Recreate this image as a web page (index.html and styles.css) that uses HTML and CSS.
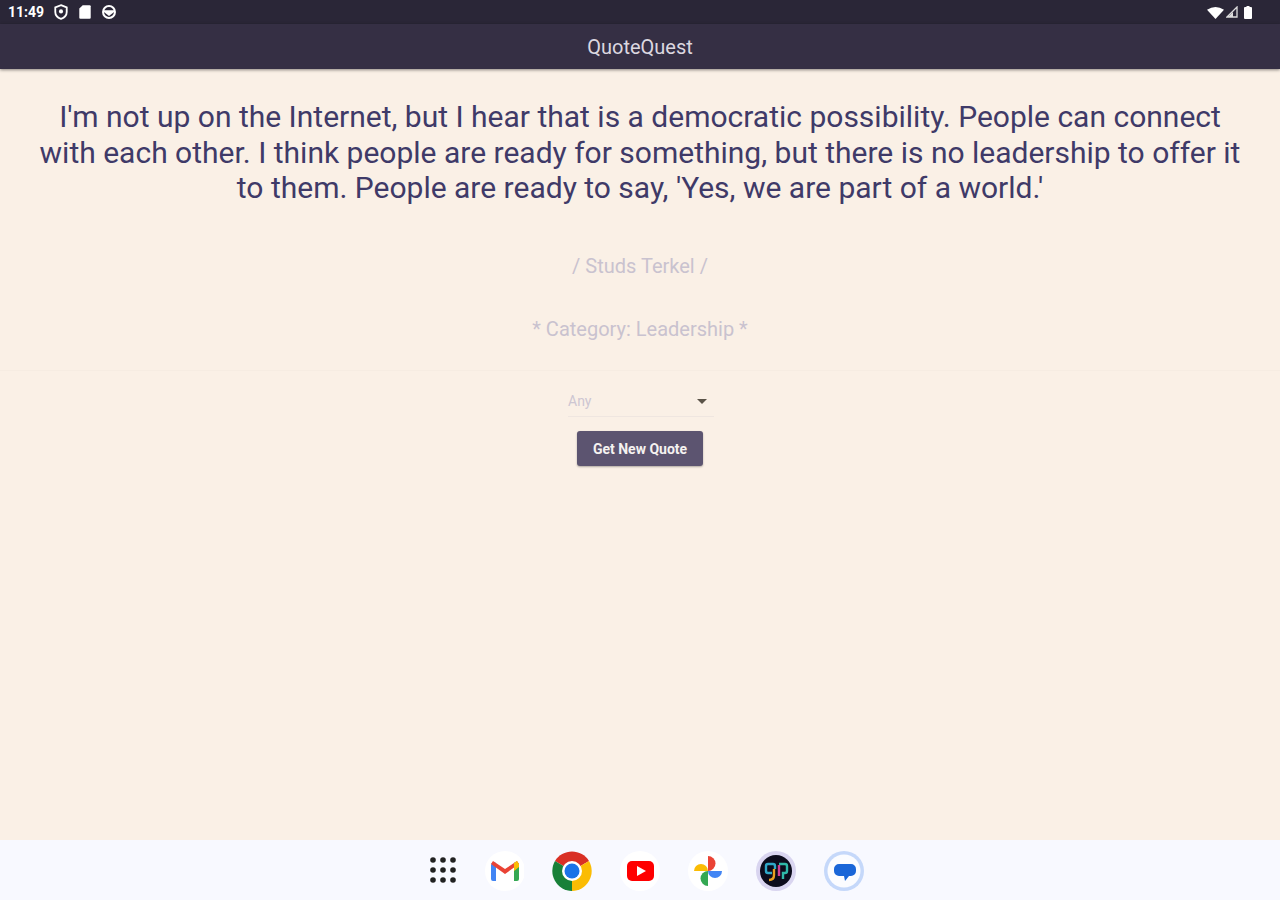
FILE: index.html
```html
<!DOCTYPE html>
<html lang="en">
<head>
<meta charset="utf-8">
<title>QuoteQuest</title>
<link rel="stylesheet" href="styles.css">
</head>
<body>
<div class="screen">
  <header class="status">
    <div class="status-left">
      <span class="clock">11:49</span>
      <svg class="si" viewBox="0 0 14 14"><path d="M7 1l5 2v4c0 3-2.200 5-5 6-2.800-1-5-3-5-6V3z" fill="none" stroke="#fff" stroke-width="1.600"/><circle cx="7" cy="6.500" r="1.800" fill="#fff"/></svg>
      <svg class="si" viewBox="0 0 14 14"><path d="M5 1h6a1 1 0 0 1 1 1v10a1 1 0 0 1-1 1H3a1 1 0 0 1-1-1V4z" fill="#fff"/></svg>
      <svg class="si" viewBox="0 0 14 14"><circle cx="7" cy="7" r="5.200" fill="none" stroke="#fff" stroke-width="1.800"/><path d="M2 5.500h10v1l-5 4-5-4z" fill="#fff"/></svg>
    </div>
    <div class="status-right">
      <svg class="wifi" viewBox="0 0 16 12"><path d="M8 12L0 3.500Q8-2 16 3.500z" fill="#fff"/></svg>
      <svg class="signal" viewBox="0 0 12 12"><path d="M11 1v10H1z" fill="none" stroke="#ddd" stroke-width="1.300"/><path d="M7 6v5H2z" fill="#ddd"/></svg>
      <svg class="battery" viewBox="0 0 8 13"><path d="M2.500 0h3v1H7a1 1 0 0 1 1 1v10a1 1 0 0 1-1 1H1a1 1 0 0 1-1-1V2a1 1 0 0 1 1-1h1.500z" fill="#fff"/></svg>
    </div>
  </header>
  <div class="appbar">QuoteQuest</div>
  <main class="content">
    <section class="quote-block">
      <p class="quote">I'm not up on the Internet, but I hear that is a democratic possibility. People can connect with each other. I think people are ready for something, but there is no leadership to offer it to them. People are ready to say, 'Yes, we are part of a world.'</p>
      <p class="author">/ Studs Terkel /</p>
      <p class="category">* Category: Leadership *</p>
    </section>
    <section class="controls">
      <div class="select">
        <span class="select-value">Any</span>
        <span class="caret"></span>
      </div>
      <button class="cta" type="button">Get New Quote</button>
    </section>
  </main>
  <nav class="dock">
    <div class="dock-item dock-apps">
      <svg class="apps" viewBox="0 0 26 26"><g fill="#222">
        <circle cx="3" cy="3" r="2.800"/><circle cx="13" cy="3" r="2.800"/><circle cx="23" cy="3" r="2.800"/>
        <circle cx="3" cy="13" r="2.800"/><circle cx="13" cy="13" r="2.800"/><circle cx="23" cy="13" r="2.800"/>
        <circle cx="3" cy="23" r="2.800"/><circle cx="13" cy="23" r="2.800"/><circle cx="23" cy="23" r="2.800"/></g></svg>
    </div>
    <div class="dock-item">
      <svg class="icon40" viewBox="0 0 40 40">
        <circle cx="21" cy="20" r="20" fill="#fff"/>
        <path d="M7 14a3 3 0 0 1 5-2v18H9a2 2 0 0 1-2-2z" fill="#4285f4"/>
        <path d="M35 14a3 3 0 0 0-5-2v18h3a2 2 0 0 0 2-2z" fill="#34a853"/>
        <path d="M7 13l14 10 14-10-2-3-12 8-12-8z" fill="#ea4335"/>
        <path d="M30 12l3-2 2 3v3l-5 4z" fill="#fbbc04"/>
      </svg>
    </div>
    <div class="dock-item">
      <svg class="icon40" viewBox="0 0 40 40">
        <path d="M20 20L3 10A20 20 0 0 1 37 10z" fill="#d93025"/>
        <path d="M20 20L3 10A20 20 0 0 0 20 40z" fill="#188038"/>
        <path d="M20 20L37 10A20 20 0 0 1 20 40z" fill="#fbbc04"/>
        <circle cx="20" cy="20" r="10" fill="#fff"/><circle cx="20" cy="20" r="7.500" fill="#1a73e8"/>
      </svg>
    </div>
    <div class="dock-item">
      <svg class="icon40" viewBox="0 0 40 40">
        <circle cx="20" cy="20" r="20" fill="#fff"/>
        <rect x="7" y="10" width="27" height="20" rx="5" fill="#f00"/>
        <path d="M17 15l9 5-9 5z" fill="#fff"/>
      </svg>
    </div>
    <div class="dock-item">
      <svg class="icon40" viewBox="0 0 40 40">
        <circle cx="20" cy="20" r="20" fill="#fff"/>
        <path d="M20 20H6a7 7 0 0 1 14 0z" fill="#fbbc04"/>
        <path d="M20 20V5a7.500 7.500 0 0 1 0 15z" fill="#ea4335"/>
        <path d="M20 20h14a7 7 0 0 1-14 0z" fill="#4285f4"/>
        <path d="M20 20v15a7.500 7.500 0 0 1 0-15z" fill="#34a853"/>
      </svg>
    </div>
    <div class="dock-item">
      <svg class="icon40" viewBox="0 0 40 40">
        <circle cx="20" cy="20" r="20" fill="#d9d5f0"/>
        <circle cx="20" cy="20" r="16" fill="#0c0c1c"/>
        <path d="M16 22h-4a2 2 0 0 1-2-2v-5a2 2 0 0 1 2-2h5a2 2 0 0 1 2 2v3" fill="none" stroke="#2fa8c8" stroke-width="2.400"/>
        <path d="M18 18v6c0 3-2 5-5 5" fill="none" stroke="#e8a020" stroke-width="2.400"/>
        <path d="M23 13h6a2 2 0 0 1 2 2v5a2 2 0 0 1-2 2h-2v6" fill="none" stroke="#2fb8a8" stroke-width="2.400"/>
        <path d="M23 14v11" fill="none" stroke="#d04090" stroke-width="2.400"/>
      </svg>
    </div>
    <div class="dock-item">
      <svg class="icon40" viewBox="0 0 40 40">
        <circle cx="20" cy="20" r="20" fill="#c5d8fa"/>
        <circle cx="20" cy="20" r="16.500" fill="#fbfcff"/>
        <path d="M15 13h12a5 5 0 0 1 5 5v2a5 5 0 0 1-5 5h-2l-4 5-1-5h-5a5 5 0 0 1-5-5v-2a5 5 0 0 1 5-5z" fill="#1a66d8"/>
      </svg>
    </div>
  </nav>
</div>
</body>
</html>
```
FILE: styles.css
```css
* { box-sizing: border-box; }
html, body { margin: 0; height: 100%; }
body { font-family: Roboto, "Liberation Sans", sans-serif; background: #faf0e6; overflow: hidden; }
.screen { display: flex; flex-direction: column; height: 900px; width: 1280px; }

.status { height: 24px; background: #2a2637; display: flex; align-items: center; justify-content: space-between; padding: 0 28px 0 8px; color: #fff; flex: none; }
.status-left, .status-right { display: flex; align-items: center; }
.clock { font-size: 14px; font-weight: 700; margin-right: 7px; width: 38px; }
.si { width: 16px; height: 16px; margin-right: 8px; }
.wifi { width: 17px; height: 13px; margin-right: 2px; }
.signal { width: 12px; height: 12px; margin-right: 6px; }
.battery { width: 8px; height: 13px; }

.appbar { height: 45px; flex: none; background: #352f44; color: #dcd8e0; font-size: 20px; display: flex; align-items: center; justify-content: center; box-shadow: 0 1px 3px rgba(0,0,0,.45); position: relative; }

.content { flex: 1; display: flex; flex-direction: column; align-items: center; }
.quote-block { width: 100%; padding: 30px 32px 0; text-align: center; border-bottom: 1px solid #f6ece2; height: 302px; }
.quote { margin: 0; font-size: 30px; line-height: 35.500px; color: #3f3a68; }
.author { margin: 48px 0 0; font-size: 20px; line-height: 24px; color: #c9c2cf; }
.category { margin: 39px 0 0; font-size: 20px; line-height: 24px; color: #c9c2cf; }

.controls { display: flex; flex-direction: column; align-items: center; }
.select { width: 146px; height: 31px; margin: 15px 0 0 2px; padding: 0 7px 0 0; display: flex; align-items: center; justify-content: space-between; border-bottom: 1px solid #efe6e0; }
.select-value { font-size: 14px; color: #cdc6d2; }
.caret { width: 0; height: 0; border-left: 5px solid transparent; border-right: 5px solid transparent; border-top: 5px solid #5a5348; }
.cta { margin-top: 14px; width: 126px; height: 35px; border: 0; border-radius: 3px; background: #5c5470; color: #f5f2f0; font: 700 14px Roboto, "Liberation Sans", sans-serif; padding: 0; box-shadow: 0 1px 2px rgba(0,0,0,.3); }

.dock { height: 60px; flex: none; background: #f8f9ff; display: flex; align-items: center; justify-content: center; gap: 28px; padding-top: 1px; }
.dock-item { width: 40px; height: 40px; display: flex; align-items: center; justify-content: center; }
.dock-apps { justify-content: flex-end; }
.apps { width: 26px; height: 26px; margin-bottom: 2px; }
.icon40 { width: 40px; height: 40px; }
```
